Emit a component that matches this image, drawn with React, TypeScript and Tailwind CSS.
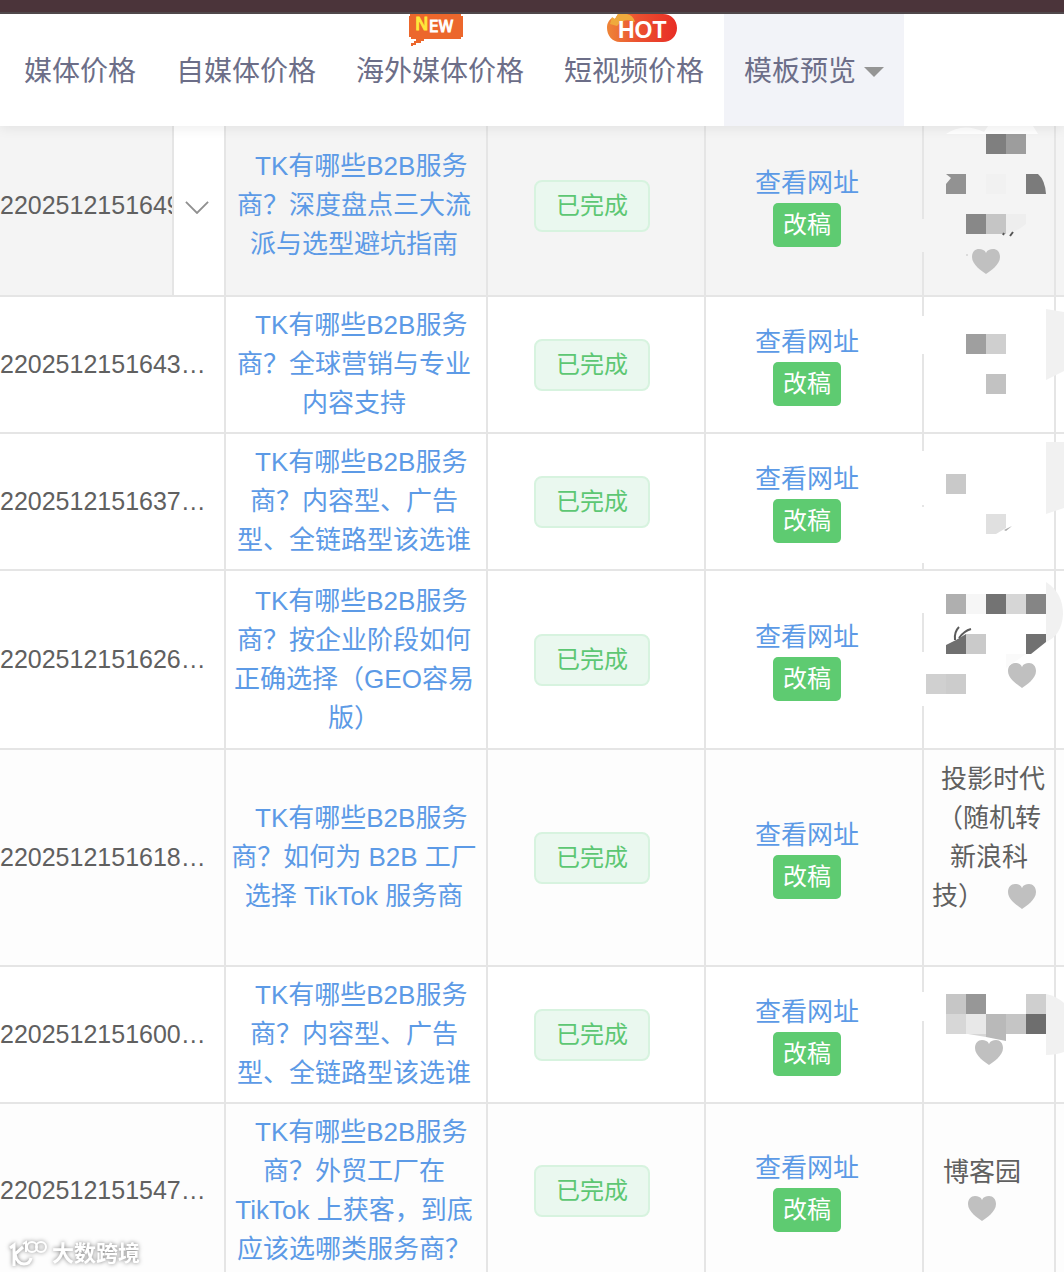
import type { ReactNode } from "react";

type Order = {
  id: string;
  title: string[];
  height: string;
  bg: string;
  expandable?: boolean;
  media: ReactNode;
};

function Heart({ className = "" }: { className?: string }) {
  return (
    <button type="button" aria-label="收藏" className={`block w-7 ${className}`}>
      <svg viewBox="0 0 28 25" className="block w-7" fill="#c0c0c0">
        <path d="M14 25C10 22 0 16 0 8C0 3 3 0 7 0C10 0 13 1 14 4C15 1 18 0 21 0C25 0 28 3 28 8C28 16 18 22 14 25Z" />
      </svg>
    </button>
  );
}

// Covers the masked media names, drawn on top of the cell and its borders
function Mosaic({ children }: { children: ReactNode }) {
  return (
    <svg className="pointer-events-none absolute top-0 -left-0.5 h-full w-[142px]" aria-hidden="true">
      {children}
    </svg>
  );
}

function Tile({ x, y, fill }: { x: number; y: number; fill: string }) {
  return <rect x={x} y={y} width="20" height="20" fill={fill} />;
}

const orders: Order[] = [
  {
    id: "2202512151649",
    title: ["\u00a0\u00a0TK有哪些B2B服务", "商？深度盘点三大流", "派与选型避坑指南"],
    height: "h-[181px]",
    bg: "bg-[#f4f4f4]",
    expandable: true,
    media: (
      <>
        <Mosaic>
          <rect x="0" y="103" width="2" height="33" fill="#f4f4f4" />
          <path d="M24 18Q41 6 62 16L66 10H111L116 18Z" fill="#fff" />
          <Tile x={64} y={18} fill="#7f7f7f" />
          <Tile x={84} y={18} fill="#9d9d9d" />
          <path d="M24 58H44V78H24V68L29 62Z" fill="#929292" />
          <Tile x={64} y={58} fill="#f1f1f1" />
          <path d="M104 58H116Q123 64 124 78H104Z" fill="#7b7b7b" />
          <Tile x={44} y={98} fill="#888888" />
          <Tile x={64} y={98} fill="#c5c5c5" />
          <path d="M84 98H104V108Q96 115 84 118Z" fill="#eeeeee" />
          <path d="M82 117L81 119M91 116L88 120" stroke="#555" strokeWidth="2" />
          <path d="M44 139H46" stroke="#c4c4c4" />
        </Mosaic>
        <Heart className="mt-28 ml-12" />
      </>
    ),
  },
  {
    id: "2202512151643…",
    title: ["\u00a0\u00a0TK有哪些B2B服务", "商？全球营销与专业", "内容支持"],
    height: "h-[137px]",
    bg: "bg-white",
    media: (
      <Mosaic>
        <rect x="0" y="19" width="2" height="38" fill="#fff" />
        <Tile x={44} y={37} fill="#9f9f9f" />
        <Tile x={64} y={37} fill="#cfcfcf" />
        <Tile x={64} y={77} fill="#c2c2c2" />
        <path d="M124 12L142 15V74L124 83Z" fill="#f1f1f1" />
      </Mosaic>
    ),
  },
  {
    id: "2202512151637…",
    title: ["\u00a0\u00a0TK有哪些B2B服务", "商？内容型、广告", "型、全链路型该选谁"],
    height: "h-[137px]",
    bg: "bg-white",
    media: (
      <Mosaic>
        <path d="M0 17H2V71H0ZM0 73H2V129H0ZM2 135H80L90 137H2Z" fill="#fff" />
        <Tile x={24} y={40} fill="#c9c9c9" />
        <path d="M64 80H84V94L74 100H64Z" fill="#e0e0e0" />
        <path d="M82 96L90 92L84 97Z" fill="#aaa" />
        <path d="M124 8H142V74L124 80Z" fill="#f1f1f1" />
      </Mosaic>
    ),
  },
  {
    id: "2202512151626…",
    title: ["\u00a0\u00a0TK有哪些B2B服务", "商？按企业阶段如何", "正确选择（GEO容易", "版）"],
    height: "h-[179px]",
    bg: "bg-white",
    media: (
      <>
        <Mosaic>
          <path d="M0 0H2V42H0ZM0 81H2V135H0Z" fill="#fff" />
          {/* the border above is masked up to here */}
          <path d="M2 -2H80L90 0H2Z" fill="#fff" />
          <Tile x={24} y={23} fill="#afafaf" />
          <Tile x={44} y={23} fill="#f6f6f6" />
          <Tile x={64} y={23} fill="#737373" />
          <Tile x={84} y={23} fill="#d6d6d6" />
          <Tile x={104} y={23} fill="#858585" />
          <path d="M124 11Q141 22 141 43Q140 64 124 71Z" fill="#f1f1f1" />
          <path d="M24 74L34 69L44 63V83H24Z" fill="#707070" />
          <Tile x={44} y={63} fill="#cacaca" />
          <path d="M33 69Q32 61 37 56M37 67Q42 60 49 58" fill="none" stroke="#5c5c5c" strokeWidth="2" />
          <path d="M104 63H124V71L109 83H104Z" fill="#717171" />
          <path d="M84 83H104L84 97Z" fill="#fafafa" />
          <Tile x={4} y={103} fill="#d0d0d0" />
          <Tile x={24} y={103} fill="#cccccc" />
        </Mosaic>
        <Heart className="mt-8 ml-21" />
      </>
    ),
  },
  {
    id: "2202512151618…",
    title: ["\u00a0\u00a0TK有哪些B2B服务", "商？如何为 B2B 工厂", "选择 TikTok 服务商"],
    height: "h-[217px]",
    bg: "bg-[#fdfdfd]",
    media: (
      <div className="pb-[39px] text-[#606060]">
        <span className="block pl-2">投影时代</span>
        <span className="block">（随机转</span>
        <span className="block">新浪科</span>
        <span className="flex items-center justify-between pr-4.5 pl-2">
          技）
          <Heart />
        </span>
      </div>
    ),
  },
  {
    id: "2202512151600…",
    title: ["\u00a0\u00a0TK有哪些B2B服务", "商？内容型、广告", "型、全链路型该选谁"],
    height: "h-[137px]",
    bg: "bg-white",
    media: (
      <>
        <Mosaic>
          <rect x="0" y="25" width="2" height="29" fill="#fff" />
          <Tile x={24} y={27} fill="#c6c6c6" />
          <Tile x={44} y={27} fill="#979797" />
          <Tile x={104} y={27} fill="#cfcfcf" />
          <Tile x={24} y={47} fill="#d7d7d7" />
          <Tile x={44} y={47} fill="#e8e8e8" />
          <path d="M46 67H64V70Z" fill="#d6d6d6" />
          <path d="M64 47H84V74L64 70Z" fill="#b9b9b9" />
          <Tile x={84} y={47} fill="#c5c5c5" />
          <Tile x={104} y={47} fill="#6e6e6e" />
          <path d="M124 27Q134 29 142 36V85Q134 88 124 88Z" fill="#f1f1f1" />
        </Mosaic>
        <Heart className="mx-auto mt-9" />
      </>
    ),
  },
  {
    id: "2202512151547…",
    title: ["\u00a0\u00a0TK有哪些B2B服务", "商？外贸工厂在", "TikTok 上获客，到底", "应该选哪类服务商？"],
    height: "h-[175px]",
    bg: "bg-[#fdfdfd]",
    media: (
      <div className="pr-3.5 pb-2 text-[#606060]">
        <span className="block">博客园</span>
        <Heart className="mx-auto mt-1" />
      </div>
    ),
  },
];

function NewBadge() {
  return (
    <svg viewBox="0 0 54 32" className="absolute top-0 left-[73px] w-[54px]" role="img" aria-label="NEW">
      <path d="M1 0H52V2H54V23H52V25H15V27H12V29H7V31H4V32H2V29H5V27H7V25H2V23H0V2H1Z" fill="#ec672c" />
      <g fontFamily="DejaVu Sans, sans-serif">
        <text x="6" y="16" fontSize="18" fill="#ffe83b" stroke="#ffe83b">N</text>
        <text x="20" y="18" fontSize="15" fill="#fff" stroke="#fff">EW</text>
      </g>
    </svg>
  );
}

function HotBadge() {
  return (
    <svg viewBox="0 0 70 28" className="absolute top-0 left-[63px] w-[70px]" role="img" aria-label="HOT">
      <defs>
        <linearGradient id="hot" x1="0" x2="1" y1="0" y2="0">
          <stop offset="0%" stopColor="#ee8538" />
          <stop offset="45%" stopColor="#eb5030" />
          <stop offset="100%" stopColor="#e82e25" />
        </linearGradient>
      </defs>
      <path d="M5 4L8 5L11 0H56C64 0 70 6 70 14S64 28 56 28H13C5 28 0 21 0 14C0 9 2 6 5 4Z" fill="url(#hot)" />
      <path d="M3 10L5 3L8 5L11 0H20Q26 1 28 8Q17 3 10 12Z" fill="#efaa3d" />
      <text x="11" y="24" fontFamily="Liberation Sans, sans-serif" fontWeight="bold" fontSize="23" fill="#fff">HOT</text>
    </svg>
  );
}

const navItems = [
  { label: "媒体价格" },
  { label: "自媒体价格" },
  { label: "海外媒体价格", badge: <NewBadge /> },
  { label: "短视频价格", badge: <HotBadge /> },
];

function Header() {
  return (
    <header className="relative z-10 bg-white shadow-[0_2px_12px_rgba(0,0,0,0.08)]">
      <div className="h-3.5 border-b-2 border-[#50484b] bg-[#4b343a]" />
      <nav className="flex h-28 pl-1 text-[28px] whitespace-nowrap text-[#6c6e88]">
        {navItems.map((item) => (
          <a key={item.label} href="#" className="relative flex items-center px-5 pt-1">
            {item.label}
            {item.badge}
          </a>
        ))}
        <button type="button" className="flex items-center gap-2 bg-[#f2f3f8] px-5 pt-1">
          模板预览
          <svg viewBox="0 0 20 10" className="w-5" fill="#959595">
            <path d="M0 0H20L10 10Z" />
          </svg>
        </button>
      </nav>
    </header>
  );
}

function OrderRow({ order }: { order: Order }) {
  const cell = "border-r-2 border-b-2 border-[#e5e5e5]";
  return (
    <tr className={`${order.height} ${order.bg}`}>
      <td className={`${cell} text-left text-[25px] text-[#606060]`}>
        {order.expandable ? (
          <div className="flex h-[179px] items-center">
            <span className="flex-1 overflow-hidden">{order.id}</span>
            <button
              type="button"
              aria-label="展开"
              className="flex h-full w-[52px] items-center justify-center border-l-2 border-[#e5e5e5] bg-white pt-1 pr-1"
            >
              <svg viewBox="0 0 26 14" className="w-6" fill="none" stroke="#909090" strokeWidth="2">
                <path d="M1 1L13 13L25 1" />
              </svg>
            </button>
          </div>
        ) : (
          order.id
        )}
      </td>
      <td className={`${cell} pr-1`}>
        <a href="#" className="text-[#5c9ae6]">
          {order.title.map((line) => (
            <span key={line} className="block">
              {line}
            </span>
          ))}
        </a>
      </td>
      <td className={`${cell} pr-2`}>
        <span className="inline-flex h-[52px] items-center rounded-lg border-2 border-[#d7f3df] bg-[#eaf8ef] px-5 align-middle text-2xl text-[#5dc773]">
          已完成
        </span>
      </td>
      <td className={`${cell} pr-3.5`}>
        <div className="flex flex-col items-center">
          <a href="#" className="text-[#5c9ae6]">
            查看网址
          </a>
          <button type="button" className="h-11 rounded-[5px] bg-[#5ecb71] px-2.5 text-2xl text-white">
            改稿
          </button>
        </div>
      </td>
      <td className={`${cell} relative`}>{order.media}</td>
      <td className="border-b-2 border-[#e5e5e5]" />
    </tr>
  );
}

function Watermark() {
  return (
    <div className="absolute bottom-0.5 left-2 flex items-center gap-1 text-[22px] leading-8 font-bold text-white drop-shadow-[0_0_2px_rgba(0,0,0,0.5)]">
      <svg viewBox="0 0 40 28" className="w-10" fill="none" stroke="#fff" strokeWidth="3">
        <path d="M2 8L6 5V26M15 7L7 14Q9 24 16 24Q22 24 23 18" />
        <path d="M15 4L18 2V12" strokeWidth="2" />
        <circle cx="24" cy="7" r="5" strokeWidth="2" />
        <circle cx="33" cy="7" r="5" strokeWidth="2" />
      </svg>
      大数跨境
    </div>
  );
}

export default function App() {
  return (
    <div className="relative h-screen overflow-hidden bg-white font-['Liberation_Sans','Noto_Sans_CJK_SC',sans-serif]">
      <Header />
      {/* the header hides the top of the first row */}
      <main className="-mt-2.5">
        <table className="w-full table-fixed border-separate border-spacing-0 text-center text-[26px] leading-[39px] whitespace-nowrap">
          <colgroup>
            <col className="w-[226px]" />
            <col className="w-[262px]" />
            <col className="w-[218px]" />
            <col className="w-[218px]" />
            <col className="w-[132px]" />
            <col />
          </colgroup>
          <tbody>
            {orders.map((order) => (
              <OrderRow key={order.id} order={order} />
            ))}
          </tbody>
        </table>
      </main>
      <Watermark />
    </div>
  );
}
